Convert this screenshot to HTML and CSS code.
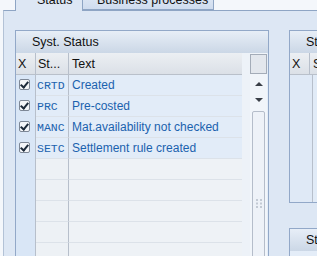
FILE: index.html
```html
<!DOCTYPE html>
<html lang="en">
<head>
  <meta charset="UTF-8">
  <title>Status</title>
  <link rel="stylesheet" href="styles.css">
</head>
<body>
  <div class="tabs">
    <div class="tab tab-active">Status</div>
    <div class="tab">Business processes</div>
  </div>

  <div class="panel">
    <div class="groupbox group-left">
      <div class="group-head">Syst. Status</div>
      <div class="group-body">
        <div class="table">
          <div class="row row-head">
            <div class="c-x">X</div>
            <div class="c-st">St...</div>
            <div class="c-txt">Text</div>
          </div>
          <div class="row row-full">
            <div class="c-x"><span class="chk"></span></div>
            <div class="c-st code">CRTD</div>
            <div class="c-txt">Created</div>
          </div>
          <div class="row row-full">
            <div class="c-x"><span class="chk"></span></div>
            <div class="c-st code">PRC</div>
            <div class="c-txt">Pre-costed</div>
          </div>
          <div class="row row-full">
            <div class="c-x"><span class="chk"></span></div>
            <div class="c-st code">MANC</div>
            <div class="c-txt">Mat.availability not checked</div>
          </div>
          <div class="row row-full">
            <div class="c-x"><span class="chk"></span></div>
            <div class="c-st code">SETC</div>
            <div class="c-txt">Settlement rule created</div>
          </div>
          <div class="row"><div class="c-x"></div><div class="c-st"></div><div class="c-txt"></div></div>
          <div class="row"><div class="c-x"></div><div class="c-st"></div><div class="c-txt"></div></div>
          <div class="row"><div class="c-x"></div><div class="c-st"></div><div class="c-txt"></div></div>
          <div class="row"><div class="c-x"></div><div class="c-st"></div><div class="c-txt"></div></div>
          <div class="row"><div class="c-x"></div><div class="c-st"></div><div class="c-txt"></div></div>
        </div>
        <div class="spacer"></div>
        <div class="vscroll">
          <div class="vs-corner"></div>
          <div class="vs-btn"><span class="arrow-up"></span></div>
          <div class="vs-btn"><span class="arrow-down"></span></div>
          <div class="vs-thumb">
            <svg class="grip" width="6" height="9" viewBox="0 0 6 9">
              <rect x="0" y="0" width="2" height="2" fill="#c3cad4"/>
              <rect x="4" y="0" width="2" height="2" fill="#c3cad4"/>
              <rect x="0" y="3.5" width="2" height="2" fill="#c3cad4"/>
              <rect x="4" y="3.5" width="2" height="2" fill="#c3cad4"/>
              <rect x="0" y="7" width="2" height="2" fill="#c3cad4"/>
              <rect x="4" y="7" width="2" height="2" fill="#c3cad4"/>
            </svg>
          </div>
        </div>
      </div>
    </div>

    <div class="right-col">
      <div class="groupbox group-right">
        <div class="group-head">St</div>
        <div class="row row-head">
          <div class="c-x c-x-wide">X</div>
          <div class="c-txt">S</div>
        </div>
        <div class="right-body">
          <div class="c-x c-x-wide"></div>
        </div>
      </div>
      <div class="groupbox group-right2">
        <div class="group-head">St</div>
      </div>
    </div>
  </div>
</body>
</html>
```

FILE: styles.css
```css
html, body {
  margin: 0;
  height: 100%;
  overflow: hidden;
}
body {
  background-color: #f4f7fb;
  font-family: "Liberation Sans", Arial, sans-serif;
  font-size: 12px;
  color: #111;
}

/* tab strip, cut off at the top */
.tabs {
  display: flex;
  height: 20px;
  margin-top: -10px;
  padding-left: 15px;
}
.tab {
  box-sizing: border-box;
  height: 20px;
  line-height: 19px;
  width: 131px;
  padding-left: 14px;
  font-size: 12.5px;
  background: linear-gradient(#e3ecf7, #cfdcee);
  border: 1px solid #8ea5c4;
  border-left: none;
}
.tab-active {
  position: relative;
  z-index: 1;
  width: 68px;
  height: 21px;
  padding-left: 21px;
  background: #dde7f4;
  border-left: 1px solid #8ea5c4;
  border-bottom: none;
  border-top-left-radius: 9px;
}

.panel {
  box-sizing: border-box;
  display: flex;
  gap: 20px;
  height: calc(100% - 10px);
  margin-left: 3px;
  padding: 19px 0 0 11px;
  background-color: #dde7f4;
  border-top: 1px solid #8ea5c4;
  border-left: 1px solid #b3c2d6;
  overflow: hidden;
}

.groupbox {
  box-sizing: border-box;
  border: 1px solid #92a8c8;
  background-color: #e4edf8;
}
.group-head {
  height: 22px;
  line-height: 23px;
  padding-left: 16px;
  font-size: 12.5px;
  background: linear-gradient(#e7eef7, #cbd7e6);
}
.group-left {
  flex: none;
  width: 254px;
  height: 260px;
}
.group-body {
  display: flex;
}

.table {
  width: 226px;
}
.row {
  display: flex;
  height: 21px;
}
.row > div {
  box-sizing: border-box;
  height: 21px;
  line-height: 21px;
  white-space: nowrap;
  overflow: hidden;
}
.c-x {
  width: 20px;
  padding-left: 2px;
  background-color: #d9e6f6;
  border-right: 1px solid #b7bfcb;
}
.c-x-wide {
  width: 20px;
}
.c-st {
  width: 33px;
  padding-left: 1px;
  background-color: #edf1f5;
  border-right: 1px solid #b7bfcb;
  border-bottom: 1px solid #dce2e9;
}
.c-txt {
  flex: 1;
  padding-left: 3px;
  background-color: #eef2f6;
  border-bottom: 1px solid #dce2e9;
}
.row-head {
  height: 22px;
}
.row-head > div {
  height: 22px;
  line-height: 22px;
  font-size: 12.5px;
  background: linear-gradient(#eceff3, #dbe0e7);
  border-bottom: 1px solid #b9c0ca;
}
.row-head .c-st {
  padding-left: 2px;
}
.row-full .c-st,
.row-full .c-txt {
  background-color: #e2ecf8;
  color: #1b62ae;
}
.code {
  font-family: "Liberation Mono", "Courier New", monospace;
  font-size: 11.5px;
}
.chk {
  display: block;
  box-sizing: border-box;
  width: 11px;
  height: 11px;
  margin: 4px 0 0 1px;
  border: 1px solid #7d8796;
  border-radius: 2px;
  background-color: #f4f6f9;
  position: relative;
}
.chk::after {
  content: "";
  position: absolute;
  left: 2px;
  top: 0px;
  width: 3px;
  height: 6px;
  border-right: 2px solid #1d2a3a;
  border-bottom: 2px solid #1d2a3a;
  transform: rotate(40deg);
}

.spacer {
  width: 8px;
  background-color: #edf2f8;
}
.vscroll {
  width: 17px;
  background-color: #f1f5fa;
}
.vs-corner {
  box-sizing: border-box;
  height: 20px;
  margin-top: 1px;
  border: 1px solid #a4acb8;
  background-color: #e3e7ed;
}
.vs-btn {
  height: 17px;
  display: flex;
  align-items: center;
  justify-content: center;
}
.arrow-up, .arrow-down {
  width: 0;
  height: 0;
  border-left: 4px solid transparent;
  border-right: 4px solid transparent;
}
.arrow-up {
  border-bottom: 4px solid #3a3f47;
  margin-top: 2px;
}
.arrow-down {
  border-top: 4px solid #3a3f47;
  margin-top: 1px;
}
.vs-thumb {
  box-sizing: border-box;
  height: 200px;
  margin: 3px 2px 0;
  border: 1px solid #b5bdca;
  border-radius: 2px;
  background-color: #eef2f8;
  display: flex;
  justify-content: center;
  padding-top: 87px;
}
.grip {
  display: block;
}

.right-col {
  flex: 1;
  display: flex;
  flex-direction: column;
  gap: 25px;
  min-width: 0;
}
.group-right {
  flex: none;
  height: 173px;
  border-right: none;
  display: flex;
  flex-direction: column;
}
.group-right .row-head .c-txt {
  padding-left: 3px;
}
.right-body {
  flex: 1;
  display: flex;
  background-color: #e1ebf7;
}
.right-body .c-x {
  height: auto;
  background-color: #dfe9f6;
}
.group-right2 {
  flex: none;
  height: 40px;
  border-right: none;
}
```
